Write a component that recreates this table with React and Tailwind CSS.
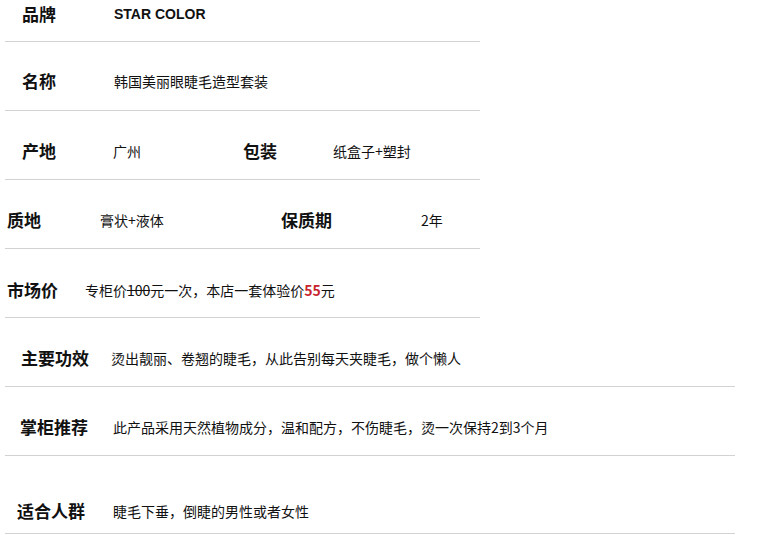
import React from 'react';

const cjk = "font-['Noto_Sans_CJK_SC','Noto_Sans',sans-serif]";

function Label({ w, children }) {
  return (
    <div className={`${w} shrink-0 text-[17px] font-bold leading-5 text-[#111]`}>{children}</div>
  );
}

function Value({ w = '', children }) {
  return <div className={`${w} shrink-0 text-[14px] leading-5 text-[#111]`}>{children}</div>;
}

export default function App() {
  return (
    <div className={`w-[760px] h-[535px] bg-white overflow-hidden ${cjk}`}>
      {/* 品牌 */}
      <div className="ml-[5px] w-[475px] h-[42px] border-b border-[#d2d2d2] flex items-start pt-[4px] pl-[17px]">
        <Label w="w-[92px]">品牌</Label>
        <div className="text-[14px] leading-5 font-bold text-[#111] font-['Liberation_Sans',sans-serif]">STAR COLOR</div>
      </div>

      {/* 名称 */}
      <div className="ml-[5px] w-[475px] h-[69px] border-b border-[#d2d2d2] flex items-start pt-[29px] pl-[17px]">
        <Label w="w-[92px]">名称</Label>
        <Value>韩国美丽眼睫毛造型套装</Value>
      </div>

      {/* 产地 / 包装 */}
      <div className="ml-[5px] w-[475px] h-[69px] border-b border-[#d2d2d2] flex items-start pt-[30px] pl-[17px]">
        <Label w="w-[91px]">产地</Label>
        <Value w="w-[130px]">广州</Value>
        <Label w="w-[90px]">包装</Label>
        <Value>纸盒子+塑封</Value>
      </div>

      {/* 质地 / 保质期 */}
      <div className="ml-[5px] w-[475px] h-[69px] border-b border-[#d2d2d2] flex items-start pt-[30px] pl-[2px]">
        <Label w="w-[93px]">质地</Label>
        <Value w="w-[181px]">膏状+液体</Value>
        <Label w="w-[140px]">保质期</Label>
        <Value>2年</Value>
      </div>

      {/* 市场价 */}
      <div className="ml-[5px] w-[475px] h-[69px] border-b border-[#d2d2d2] flex items-start pt-[31px] pl-[2px]">
        <Label w="w-[78px]">市场价</Label>
        <Value>
          专柜价<span className="line-through">100</span>元一次，本店一套体验价
          <span className="font-bold text-[#c8232c]">55</span>元
        </Value>
      </div>

      {/* 主要功效 */}
      <div className="ml-[5px] w-[730px] h-[69px] border-b border-[#d2d2d2] flex items-start pt-[30px] pl-[16px]">
        <Label w="w-[90px]">主要功效</Label>
        <Value>烫出靓丽、卷翘的睫毛，从此告别每天夹睫毛，做个懒人</Value>
      </div>

      {/* 掌柜推荐 */}
      <div className="ml-[5px] w-[730px] h-[69px] border-b border-[#d2d2d2] flex items-start pt-[30px] pl-[15px]">
        <Label w="w-[93px]">掌柜推荐</Label>
        <Value>此产品采用天然植物成分，温和配方，不伤睫毛，烫一次保持2到3个月</Value>
      </div>

      {/* 适合人群 */}
      <div className="ml-[5px] w-[730px] h-[78px] border-b border-[#d2d2d2] flex items-start pt-[45px] pl-[12px]">
        <Label w="w-[96px]">适合人群</Label>
        <Value>睫毛下垂，倒睫的男性或者女性</Value>
      </div>
    </div>
  );
}
